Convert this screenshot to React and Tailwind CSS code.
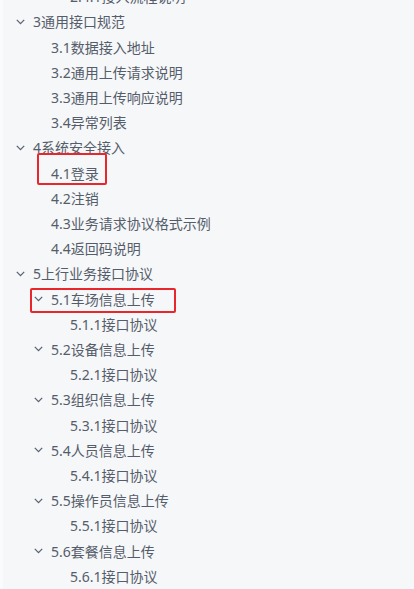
const tree = [
  { label: '2.4.1接入流程说明', level: 3 },
  { label: '3通用接口规范', level: 1, open: true },
  { label: '3.1数据接入地址', level: 2 },
  { label: '3.2通用上传请求说明', level: 2 },
  { label: '3.3通用上传响应说明', level: 2 },
  { label: '3.4异常列表', level: 2 },
  { label: '4系统安全接入', level: 1, open: true },
  { label: '4.1登录', level: 2, mark: 'a' },
  { label: '4.2注销', level: 2 },
  { label: '4.3业务请求协议格式示例', level: 2 },
  { label: '4.4返回码说明', level: 2 },
  { label: '5上行业务接口协议', level: 1, open: true },
  { label: '5.1车场信息上传', level: 2, open: true, mark: 'b' },
  { label: '5.1.1接口协议', level: 3 },
  { label: '5.2设备信息上传', level: 2, open: true },
  { label: '5.2.1接口协议', level: 3 },
  { label: '5.3组织信息上传', level: 2, open: true },
  { label: '5.3.1接口协议', level: 3 },
  { label: '5.4人员信息上传', level: 2, open: true },
  { label: '5.4.1接口协议', level: 3 },
  { label: '5.5操作员信息上传', level: 2, open: true },
  { label: '5.5.1接口协议', level: 3 },
  { label: '5.6套餐信息上传', level: 2, open: true },
  { label: '5.6.1接口协议', level: 3 },
];

const Chevron = () => (
  <svg width="9" height="6" viewBox="0 0 9 6" className="shrink-0 mr-[8px]">
    <path d="M0.8 0.9 L4.5 4.6 L8.2 0.9" fill="none" stroke="#5b6371" strokeWidth="1.3" />
  </svg>
);

const Row = ({ item }) => {
  let pad = 'pl-[70px]';
  if (item.level === 1) pad = 'pl-[16px]';
  else if (item.level === 2) pad = item.open ? 'pl-[34px]' : 'pl-[51px]';

  return (
    <div className={`relative flex items-center h-[25.27px] ${pad}`}>
      {item.open && <Chevron />}
      <span className="whitespace-nowrap">{item.label}</span>
      {item.mark === 'a' && (
        <div className="absolute left-[37px] top-[-7px] w-[70px] h-[32px] border-[2.5px] border-[#e8262c] rounded-[2px]" />
      )}
      {item.mark === 'b' && (
        <div className="absolute left-[30px] top-[2px] w-[146px] h-[25px] border-[2.5px] border-[#e8262c] rounded-[2px]" />
      )}
    </div>
  );
};

export default function App() {
  return (
    <div className="w-[414px] h-[589px] overflow-hidden bg-[#f5f7f9] flex">
      <div className="w-[3px] bg-[#fafbfc] shrink-0" />
      <div
        className="-mt-[16px] -ml-[3px] flex flex-col text-[14px] text-[#555d6a]"
        style={{ fontFamily: '"Noto Sans", "Noto Sans CJK SC", sans-serif' }}
      >
        {tree.map((item) => (
          <Row key={item.label} item={item} />
        ))}
      </div>
    </div>
  );
}
